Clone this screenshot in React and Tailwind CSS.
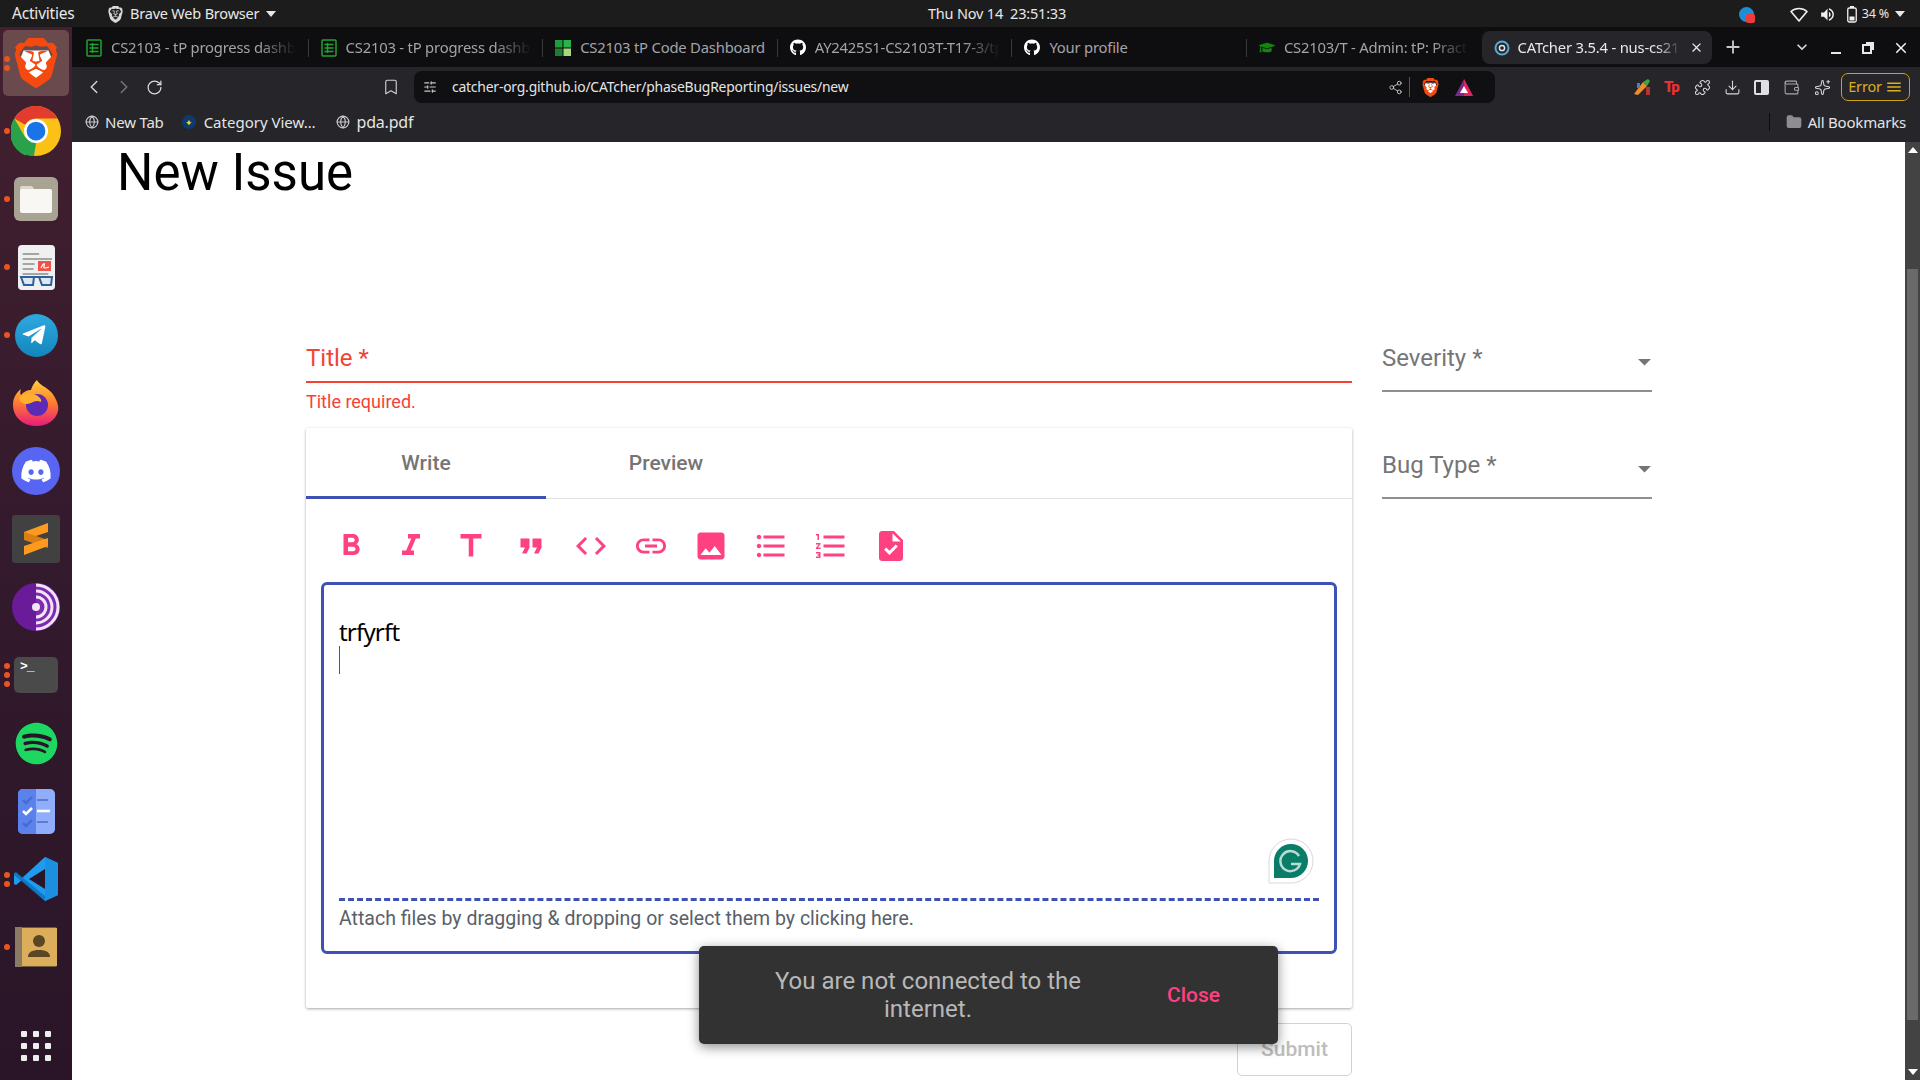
import {
  MdFormatBold, MdFormatItalic, MdTitle, MdFormatQuote, MdCode, MdLink, MdImage,
  MdFormatListBulleted, MdFormatListNumbered, MdTask, MdArrowDropDown, MdClose, MdAdd,
  MdKeyboardArrowDown, MdVolumeUp, MdMenu,
} from 'react-icons/md';
import { FaGithub, FaGraduationCap, FaSpotify, FaDiscord, FaTelegramPlane } from 'react-icons/fa';
import { SiBrave } from 'react-icons/si';
import {
  ChevronLeft, ChevronRight, RotateCw, Bookmark, SlidersHorizontal, Share2, Puzzle, Download,
  Wallet, Sparkles, Globe, Folder,
} from 'lucide-react';

function SheetIcon() {
  return (
    <svg width="16" height="18" viewBox="0 0 16 18" fill="none" stroke="#1fa32f" strokeWidth="1.5">
      <rect x="1" y="1" width="14" height="16" rx="1" />
      <path d="M3.5 5.5h9M3.5 9h9M3.5 12.5h9M6.5 4v10" />
    </svg>
  );
}

function DashIcon() {
  return (
    <svg width="16" height="16" viewBox="0 0 16 16">
      <rect width="7.5" height="7.5" fill="#1f9d3a" />
      <rect x="8.5" width="7.5" height="7.5" fill="#2ab34a" />
      <rect y="8.5" width="7.5" height="7.5" fill="#1f7d32" />
      <rect x="8.5" y="8.5" width="7.5" height="7.5" fill="#a6d87c" />
    </svg>
  );
}

function CatcherIcon({ size = 16 }) {
  return (
    <svg width={size} height={size} viewBox="0 0 16 16" fill="none">
      <circle cx="8" cy="8" r="6.5" stroke="#5da9d6" strokeWidth="2" />
      <circle cx="8" cy="8" r="2.6" stroke="#dbe8f0" strokeWidth="1.5" />
    </svg>
  );
}

function BraveLogo({ size = 40, mono = false }) {
  return (
    <div className="relative flex items-center justify-center" style={{ width: size, height: size }}>
      <svg className="absolute" width={size} height={size} viewBox="0 0 24 24">
        <path d="M6 6h12l2 5-4 9-4 2-4-2-4-9z" fill={mono ? '#2a2a2a' : '#fff'} />
      </svg>
      <SiBrave className="absolute" size={size} color={mono ? '#d8d8d8' : '#f4490f'} />
    </div>
  );
}

function ChromeLogo() {
  return (
    <svg width="50" height="50" viewBox="0 0 48 48">
      <circle cx="24" cy="24" r="24" fill="#fbc116" />
      <path d="M24 0a24 24 0 0 1 20.8 12H24a12 12 0 0 0-10.4 6L3.2 12A24 24 0 0 1 24 0z" fill="#e33b2e" />
      <path d="M3.2 12l10.4 18A12 12 0 0 0 24 36l-10.4 11.4A24 24 0 0 1 3.2 12z" fill="#2aa24a" />
      <path d="M13.6 30L24 36l-2 12a24 24 0 0 1-8.4-1.5z" fill="#2aa24a" />
      <circle cx="24" cy="24" r="11.5" fill="#fff" />
      <circle cx="24" cy="24" r="9" fill="#1a73e8" />
    </svg>
  );
}

function FilesLogo() {
  return (
    <div className="w-11 h-11 rounded-md bg-[#a8a393] flex items-center justify-center">
      <svg width="34" height="28" viewBox="0 0 34 28">
        <path d="M1 3a2 2 0 0 1 2-2h10l3 4h15a2 2 0 0 1 2 2v2H1z" fill="#dcd8cc" />
        <rect x="1" y="4" width="32" height="24" rx="2" fill="#f8f7f4" />
      </svg>
    </div>
  );
}

function ReaderLogo() {
  return (
    <svg width="37" height="45" viewBox="0 0 37 45">
      <rect width="37" height="45" rx="4" fill="#eef0f2" />
      <path d="M5 9h18M5 14h32M5 19h13M5 24h12M5 29h28" stroke="#a8a69c" strokeWidth="2" transform="translate(0 0) scale(.92 1)" />
      <rect x="20" y="16" width="13" height="10" fill="#ee5548" />
      <path d="M23 23c3-6 4-5 3-2s2 2 5 1" stroke="#fff" strokeWidth="1.2" fill="none" />
      <path d="M2 32h33" stroke="#2e5f9e" strokeWidth="2" />
      <path d="M3 32h13l-1 8H6zM21 32h13l-1 8h-9z" fill="#dfe7ef" stroke="#2e5f9e" strokeWidth="2" />
    </svg>
  );
}

function TelegramLogo() {
  return (
    <div className="w-[43px] h-[43px] rounded-full bg-gradient-to-b from-[#2ea9e0] to-[#1186bd] flex items-center justify-center">
      <FaTelegramPlane size={26} color="#fff" className="-ml-1" />
    </div>
  );
}

function FirefoxLogo() {
  return (
    <svg width="46" height="46" viewBox="0 0 46 46">
      <defs>
        <linearGradient id="ffa" x1="0" y1="0" x2="0" y2="1">
          <stop offset="0" stopColor="#ffd43a" />
          <stop offset=".5" stopColor="#ff7a2f" />
          <stop offset="1" stopColor="#e8197f" />
        </linearGradient>
      </defs>
      <path d="M24 0c2 5 10 7 15 13 5 7 7 13 6 18-2 9-11 15-22 15C10 46 0 37 0 25c0-7 3-12 8-16-1 3-1 5 0 6 2-3 6-5 10-5 1-4 3-7 6-10z" fill="url(#ffa)" />
      <circle cx="24" cy="25" r="11" fill="#5b2bb5" />
      <path d="M6 18c4-5 12-6 17-3 4 2 6 5 5 7-7-3-9 2-14 2-4 0-7-2-8-6z" fill="#ffb02e" />
    </svg>
  );
}

function SublimeLogo() {
  return (
    <div className="w-12 h-12 rounded-[3px] bg-[#414141] flex items-center justify-center">
      <svg width="26" height="32" viewBox="0 0 26 32">
        <path d="M25 0v9L1 17V9z" fill="#ff9a1f" />
        <path d="M1 9l24 8v8L1 17z" fill="#d97f16" />
        <path d="M25 15v8L1 32v-9z" fill="#ff9a1f" />
      </svg>
    </div>
  );
}

function TorLogo() {
  return (
    <svg width="48" height="48" viewBox="0 0 48 48">
      <circle cx="24" cy="24" r="24" fill="#6a1b9a" />
      <path d="M24 0a24 24 0 0 1 0 48z" fill="#7d2cae" />
      <g fill="none" stroke="#f1e4f7" strokeWidth="3">
        <path d="M24 14a10 10 0 0 1 0 20" />
        <path d="M24 8a16 16 0 0 1 0 32" />
        <path d="M24 2a22 22 0 0 1 0 44" />
      </g>
      <circle cx="24" cy="24" r="4" fill="#f1e4f7" />
    </svg>
  );
}

function TerminalLogo() {
  return (
    <div className="w-11 h-9 rounded-[5px] bg-[#4a4a4a] flex items-start pl-[6px] pt-[3px]">
      <span className="text-white text-[13px] leading-[14px] font-[family-name:'Liberation_Mono',monospace] font-bold tracking-[-1px]">&gt;_</span>
    </div>
  );
}

function TodoLogo() {
  return (
    <svg width="37" height="45" viewBox="0 0 37 45">
      <rect width="37" height="45" rx="5" fill="#8fadfb" />
      <path d="M5 0h13v45H5a5 5 0 0 1-5-5V5a5 5 0 0 1 5-5z" fill="#5b82ec" />
      <g fill="none" stroke="#456ad0" strokeWidth="2.4">
        <path d="M5 11l3 3 6-6M5 34l3 3 6-6" />
      </g>
      <path d="M5 22l3 3 6-6" fill="none" stroke="#fff" strokeWidth="2.6" />
      <path d="M19 11h11M19 33h11" stroke="#5b7bd0" strokeWidth="2" />
      <path d="M19 22h13" stroke="#fff" strokeWidth="2.6" />
    </svg>
  );
}

function VsCodeLogo() {
  return (
    <svg width="44" height="44" viewBox="0 0 44 44">
      <path d="M31 0l13 6v32l-13 6L8 23 2 28l-2-1V17l2-1 6 5z" fill="#1f9cf0" />
      <path d="M31 0l13 6v32l-13 6z" fill="#1d8fe0" />
      <path d="M31 12L15 22l16 10z" fill="#2a1629" />
      <path d="M0 16l2-1 29 24v5L0 18z" fill="#0a74bd" opacity=".85" />
    </svg>
  );
}

function ContactsLogo() {
  return (
    <svg width="42" height="40" viewBox="0 0 42 40">
      <rect width="42" height="40" rx="2" fill="#6d5a3c" />
      <rect x="7" y="1" width="35" height="38" fill="#dcae5c" />
      <rect width="7" height="40" fill="#8b7b66" />
      <circle cx="24" cy="14" r="6" fill="#5a4525" />
      <path d="M13 30c0-6 6-7 11-7s11 1 11 7z" fill="#5a4525" />
    </svg>
  );
}

function GridIcon() {
  return (
    <div className="grid grid-cols-3 gap-[6px]">
      {[...Array(9)].map((_, i) => (
        <div key={i} className="w-[6px] h-[6px] rounded-[1px] bg-[#eeeeee]" />
      ))}
    </div>
  );
}

function GrammarlyIcon() {
  return (
    <svg width="46" height="46" viewBox="0 0 46 46">
      <path d="M23 1a22 22 0 1 1 0 44H1V23A22 22 0 0 1 23 1z" fill="#fff" stroke="#d6d8e2" />
      <path d="M23 6a17 17 0 1 1 0 34H6V23A17 17 0 0 1 23 6z" fill="#0a7d69" />
      <path d="M31 18a10 10 0 1 0 1 8h-9" fill="none" stroke="#b7dcd4" strokeWidth="2.5" />
    </svg>
  );
}

const dockApps = [
  { id: 'brave', el: <BraveLogo size={50} />, dots: 2, active: true },
  { id: 'chrome', el: <ChromeLogo />, dots: 1 },
  { id: 'files', el: <FilesLogo />, dots: 1 },
  { id: 'reader', el: <ReaderLogo />, dots: 1 },
  { id: 'telegram', el: <TelegramLogo />, dots: 1 },
  { id: 'firefox', el: <FirefoxLogo />, dots: 0 },
  { id: 'discord', el: <div className="w-12 h-12 rounded-full bg-[#5865f2] flex items-center justify-center"><FaDiscord size={32} color="#fff" /></div>, dots: 0 },
  { id: 'sublime', el: <SublimeLogo />, dots: 0 },
  { id: 'tor', el: <TorLogo />, dots: 0 },
  { id: 'terminal', el: <TerminalLogo />, dots: 3 },
  { id: 'spotify', el: <div className="w-[43px] h-[43px] rounded-full bg-[#2a1528] flex items-center justify-center"><FaSpotify size={43} color="#1ed760" /></div>, dots: 0 },
  { id: 'todo', el: <TodoLogo />, dots: 0 },
  { id: 'vscode', el: <VsCodeLogo />, dots: 2 },
  { id: 'contacts', el: <ContactsLogo />, dots: 1 },
];

const tabs = [
  { title: 'CS2103 - tP progress dashboard', icon: <SheetIcon />, fade: true },
  { title: 'CS2103 - tP progress dashboard', icon: <SheetIcon />, fade: true },
  { title: 'CS2103 tP Code Dashboard', icon: <DashIcon /> },
  { title: 'AY2425S1-CS2103T-T17-3/tp', icon: <FaGithub size={17} color="#fff" />, fade: true },
  { title: 'Your profile', icon: <FaGithub size={17} color="#fff" /> },
  { title: 'CS2103/T - Admin: tP: Practical', icon: <FaGraduationCap size={17} color="#12850f" />, fade: true },
];

const toolbarIcons = [
  MdFormatBold, MdFormatItalic, MdTitle, MdFormatQuote, MdCode, MdLink, MdImage,
  MdFormatListBulleted, MdFormatListNumbered, MdTask,
];

function Dock() {
  return (
    <div className="w-[72px] shrink-0 flex flex-col items-center pt-[2px] bg-gradient-to-b from-[#43202f] via-[#331a2c] to-[#2a1528]">
      {dockApps.map(app => (
        <div key={app.id} className="relative w-full h-[68px] flex items-center justify-center">
          {app.active && <div className="absolute left-[3px] right-[3px] inset-y-[1px] rounded-[5px] bg-[#6b4a4e]" />}
          <div className="relative flex items-center justify-center">{app.el}</div>
          {/* Açık pencere noktaları */}
          <div className="absolute left-[4px] top-0 bottom-0 flex flex-col justify-center gap-[3px]">
            {[...Array(app.dots)].map((_, i) => (
              <div key={i} className="w-[6px] h-[6px] rounded-full bg-[#e9541f]" />
            ))}
          </div>
        </div>
      ))}
      <div className="mt-auto mb-[19px]"><GridIcon /></div>
    </div>
  );
}

function TopBar() {
  return (
    <div className="relative h-[27px] shrink-0 bg-[#1c1c1c] pt-[1px] flex items-center text-[14.5px] text-[#e8e8e8] font-[family-name:'Noto_Sans',sans-serif]">
      <span className="ml-3 w-[95px] text-[15.5px] tracking-[-0.2px]">Activities</span>
      <BraveLogo size={17} mono />
      <span className="ml-[6px] tracking-[-0.2px]">Brave Web Browser</span>
      <svg className="ml-[7px]" width="10" height="6" viewBox="0 0 10 6"><path d="M0 0h10L5 6z" fill="#e8e8e8" /></svg>
      <span className="absolute left-[928px] tracking-[-0.2px] whitespace-pre">Thu Nov 14  23:51:33</span>
      <div className="ml-auto flex items-center">
        <div className="relative w-[15px] h-[15px] rounded-full bg-[#1a8fd6] mr-[36px]">
          <div className="absolute right-[-1px] bottom-[-1px] w-[9px] h-[9px] rounded-[2px] bg-[#ef3b3b]" />
        </div>
        <svg className="mr-[11px]" width="18" height="15" viewBox="0 0 18 15" fill="none">
          <path d="M1 4.5C5.5.5 12.5.5 17 4.5L9 14z" stroke="#f0f0f0" strokeWidth="1.6" strokeLinejoin="round" />
        </svg>
        <MdVolumeUp size={17} color="#f0f0f0" className="mr-[11px]" />
        <svg className="mr-[5px]" width="10" height="17" viewBox="0 0 10 17" fill="none">
          <rect x=".75" y="2" width="8.5" height="14" rx="1.5" stroke="#f0f0f0" strokeWidth="1.3" />
          <rect x="3" y="0" width="4" height="2" fill="#f0f0f0" />
          <rect x="2.5" y="10.5" width="5" height="4" fill="#f0f0f0" />
        </svg>
        <span className="text-[12.5px] tracking-[-0.2px]">34 %</span>
        <svg className="ml-[6px] mr-[15px]" width="10" height="6" viewBox="0 0 10 6"><path d="M0 0h10L5 6z" fill="#e8e8e8" /></svg>
      </div>
    </div>
  );
}

function TabStrip() {
  return (
    <div className="h-[40px] shrink-0 bg-[#0e0e10] flex items-start pl-[2px] pt-[4px] text-[14.8px] font-[family-name:'Noto_Sans',sans-serif]">
      {tabs.map((tab, i) => (
        <div key={i} className="w-[234.6px] h-[33px] shrink-0 flex items-center pl-3 gap-[9px] text-[#a4a4a8] relative">
          <div className="w-4 flex justify-center shrink-0">{tab.icon}</div>
          <span className={`w-[185px] overflow-hidden whitespace-nowrap tracking-[-0.2px] ${tab.fade ? '[mask-image:linear-gradient(90deg,#000_80%,transparent)]' : ''}`}>{tab.title}</span>
          {i < 5 && <div className="absolute right-0 top-[8px] w-px h-[18px] bg-[#3a3a3e]" />}
        </div>
      ))}
      <div className="w-[230px] h-[33px] shrink-0 rounded-[8px] bg-[#25252a] flex items-center pl-3 gap-[8px] text-[#e8e8ea]">
        <CatcherIcon />
        <span className="w-[163px] overflow-hidden whitespace-nowrap tracking-[-0.2px] [mask-image:linear-gradient(90deg,#000_85%,transparent)]">CATcher 3.5.4 - nus-cs2103</span>
        <MdClose size={15} color="#e8e8ea" />
      </div>
      <MdAdd size={22} color="#c8c8cc" className="ml-[10px] mt-[5px]" />
      <MdKeyboardArrowDown size={20} color="#d8d8dc" className="ml-[48px] mt-[6px]" />
      <div className="ml-[19px] mt-[21px] w-[10px] h-[2px] bg-[#e8e8ea]" />
      <svg className="ml-[21px] mt-[11px]" width="12" height="12" viewBox="0 0 12 12" fill="none" stroke="#e8e8ea" strokeWidth="2">
        <rect x="1" y="3" width="8" height="8" fill="#0e0e10" />
        <path d="M4 1h7v7" />
      </svg>
      <MdClose size={18} color="#f0f0f0" className="ml-[18px] mt-[8px]" />
    </div>
  );
}

function NavBar() {
  const url = 'catcher-org.github.io/CATcher/phaseBugReporting/issues/new';
  return (
    <div className="h-[41px] shrink-0 bg-[#25252a] flex items-center pb-[1px]">
      <ChevronLeft size={22} strokeWidth={1.5} color="#d8d8dc" className="ml-[11px]" />
      <ChevronRight size={22} strokeWidth={1.5} color="#77777c" className="ml-[8px]" />
      <RotateCw size={17} strokeWidth={1.8} color="#d8d8dc" className="ml-[11px]" />
      <Bookmark size={18} strokeWidth={1.5} color="#d0d0d4" className="ml-[219px]" />
      {/* Adres çubuğu */}
      <div className="ml-[14px] w-[1081px] h-[32px] rounded-[8px] bg-[#101012] flex items-center pl-[9px] pr-[22px]">
        <SlidersHorizontal size={14} color="#c8c8cc" />
        <span className="ml-[15px] text-[13.9px] tracking-[-0.2px] text-[#e4e4e6] font-[family-name:'Noto_Sans',sans-serif]">{url}</span>
        <Share2 size={15} strokeWidth={1.5} color="#c8c8cc" className="ml-auto" />
        <div className="ml-[6px] w-px h-[20px] bg-[#55555a]" />
        <div className="ml-[11px]"><BraveLogo size={19} /></div>
        <svg className="ml-[15px]" width="18" height="17" viewBox="0 0 18 17">
          <path d="M9 0l9 17H0z" fill="#7b2a8c" />
          <path d="M9 0l9 17H9z" fill="#e0245e" />
          <path d="M9 7l4 7H5z" fill="#fff" />
        </svg>
      </div>
      {/* Eklentiler */}
      <svg className="ml-[139px]" width="17" height="17" viewBox="0 0 17 17">
        <path d="M0 15L9 3l4 4-9 9z" fill="#f28c28" />
        <path d="M9 3l4 4 3-5-2-2z" fill="#3fa34d" />
        <rect x="12" y="8" width="4" height="8" fill="#b5332e" />
        <rect x="3" y="4" width="3" height="5" fill="#3b82d6" />
      </svg>
      <span className="ml-[13px] w-[18px] text-[#e83232] font-black text-[15px] tracking-[-1.5px] font-[family-name:Roboto,sans-serif]">Tp</span>
      <Puzzle size={17} strokeWidth={1.5} color="#d8d8dc" className="ml-[12px]" />
      <Download size={17} strokeWidth={1.5} color="#d8d8dc" className="ml-[13px]" />
      <div className="ml-[13px] w-[15px] h-[15px] rounded-[2px] border-2 border-[#e0e0e4] flex justify-end"><div className="w-[6px] h-full bg-[#e0e0e4]" /></div>
      <Wallet size={17} strokeWidth={1.5} color="#a8a8ac" className="ml-[14px]" />
      <Sparkles size={17} strokeWidth={1.5} color="#d8d8dc" className="ml-[14px]" />
      <div className="ml-[10px] w-[69px] h-[28px] rounded-[7px] border border-[#caa21b] flex items-center justify-center gap-[3px] text-[#d9ae21] text-[14.5px] tracking-[-0.2px] font-[family-name:'Noto_Sans',sans-serif]">
        Error
        <MdMenu size={18} color="#d9ae21" />
      </div>
    </div>
  );
}

function BookmarkBar() {
  return (
    <div className="h-[34px] shrink-0 bg-[#25252a] flex items-center pb-[6px] text-[15px] text-[#e4e4e6] tracking-[-0.2px] font-[family-name:'Noto_Sans',sans-serif]">
      <Globe size={14} color="#c8c8cc" className="ml-[13px]" />
      <span className="ml-[6px]">New Tab</span>
      <div className="ml-[18px] w-[14px] h-[14px] rounded-full bg-[#10386e] flex items-center justify-center text-[#f2d13c] text-[9px] leading-none">✦</div>
      <span className="ml-[8px] tracking-[0px]">Category View…</span>
      <Globe size={14} color="#c8c8cc" className="ml-[20px]" />
      <span className="ml-[7px] text-[16px]">pda.pdf</span>
      <div className="ml-auto w-px h-[18px] bg-[#0c0c0e]" />
      <Folder size={16} fill="#8e8e92" color="#8e8e92" className="ml-[16px]" />
      <span className="ml-[6px] mr-[14px]">All Bookmarks</span>
    </div>
  );
}

function SelectField({ label }) {
  return (
    <div className="h-[68px] pt-[19px] border-b-2 border-[#8f8f8f] flex justify-between">
      <span className="text-[24px] leading-[30px] text-[#757575]">{label}</span>
      <MdArrowDropDown size={31} color="#757575" className="mt-[3px] -mr-[8px]" />
    </div>
  );
}

function Editor() {
  return (
    <div className="relative mx-[15px] h-[372px] border-[3px] border-[#3f51b5] rounded-[6px] flex flex-col px-[15px]">
      <div className="flex-1 pt-[33px] text-[24px] leading-[28px] text-black">
        <div className="font-[family-name:'Noto_Sans',sans-serif] tracking-[-0.8px]">trfyrft</div>
        <div className="w-px h-[28px] bg-[#3f51b5]" />
      </div>
      <div className="border-t-[3px] border-dashed border-[#3f51b5] h-[53px] pt-[5px] text-[19.5px] leading-[26px] text-[#586069]">
        Attach files by dragging &amp; dropping or select them by clicking here.
      </div>
      <div className="absolute right-[20px] bottom-[67px]"><GrammarlyIcon /></div>
    </div>
  );
}

function Page() {
  return (
    <div className="relative flex-1 min-h-0 bg-white flex font-[family-name:Roboto,sans-serif] overflow-hidden">
      <div className="flex-1 min-w-0">
        <h1 className="ml-[45px] pt-[3px] text-[51px] leading-[56px] text-black font-normal">New Issue</h1>

        <div className="ml-[234px] mt-[140px] flex gap-[30px] items-start">
          {/* Sol kolon */}
          <div className="w-[1046px] shrink-0">
            <div className="h-[42px] pt-[1px] border-b-2 border-[#f44336] text-[24px] leading-[32px] text-[#f44336]">Title *</div>
            <div className="h-[45px] pt-[7px] text-[18px] leading-[24px] text-[#f44336]">Title required.</div>

            <div className="h-[580px] bg-white rounded-[2px] shadow-[0_1px_3px_rgba(0,0,0,0.35)]">
              <div className="h-[71px] border-b border-[#e0e0e0] flex">
                <div className="w-[240px] h-[71px] pt-[3px] border-b-[3px] border-[#3f51b5] flex items-center justify-center text-[21px] font-medium text-[#757575]">Write</div>
                <div className="w-[240px] pt-[2px] flex items-center justify-center text-[21px] font-medium text-[#757575]">Preview</div>
              </div>
              <div className="h-[83px] pl-[15px] pt-[11px] flex items-center">
                {toolbarIcons.map((Icon, i) => (
                  <div key={i} className="w-[60px] flex justify-center">
                    <Icon size={36} color="#ff4081" />
                  </div>
                ))}
              </div>
              <Editor />
            </div>

            <div className="mt-[15px] flex justify-end">
              <button className="w-[115px] h-[53px] rounded-[5px] border border-[#d2d2d2] text-[21px] font-medium text-[#bdbdbd]">Submit</button>
            </div>
          </div>

          {/* Sağ kolon */}
          <div className="w-[270px] shrink-0 -mt-[17px]">
            <SelectField label="Severity *" />
            <div className="mt-[39px]"><SelectField label="Bug Type *" /></div>
          </div>
        </div>
      </div>

      {/* Kaydırma çubuğu */}
      <div className="w-[15px] shrink-0 bg-[#434343] flex flex-col items-center relative">
        <svg className="mt-[5px]" width="10" height="6" viewBox="0 0 10 6"><path d="M5 0l5 6H0z" fill="#fff" /></svg>
        <div className="mt-[116px] w-[11px] h-[751px] bg-[#6a6a6a]" />
        <svg className="mt-auto mb-[5px]" width="10" height="6" viewBox="0 0 10 6"><path d="M5 6L0 0h10z" fill="#fff" /></svg>
      </div>

      {/* Snackbar */}
      <div className="absolute left-[627px] bottom-[36px] w-[579px] h-[98px] rounded-[5px] bg-[#323232] shadow-[0_3px_12px_rgba(0,0,0,0.45)] flex items-center pl-[39px]">
        <div className="w-[380px] shrink-0 text-center text-[24px] leading-[28px] text-[#b8b8b8]">You are not connected to the internet.</div>
        <div className="ml-[49px] pt-[1px] text-[21px] font-medium text-[#ff4081]">Close</div>
      </div>
    </div>
  );
}

export default function App() {
  return (
    <div className="w-[1920px] h-[1080px] flex flex-col overflow-hidden">
      <TopBar />
      <div className="flex-1 min-h-0 flex">
        <Dock />
        <div className="flex-1 min-w-0 flex flex-col">
          <TabStrip />
          <NavBar />
          <BookmarkBar />
          <Page />
        </div>
      </div>
    </div>
  );
}
